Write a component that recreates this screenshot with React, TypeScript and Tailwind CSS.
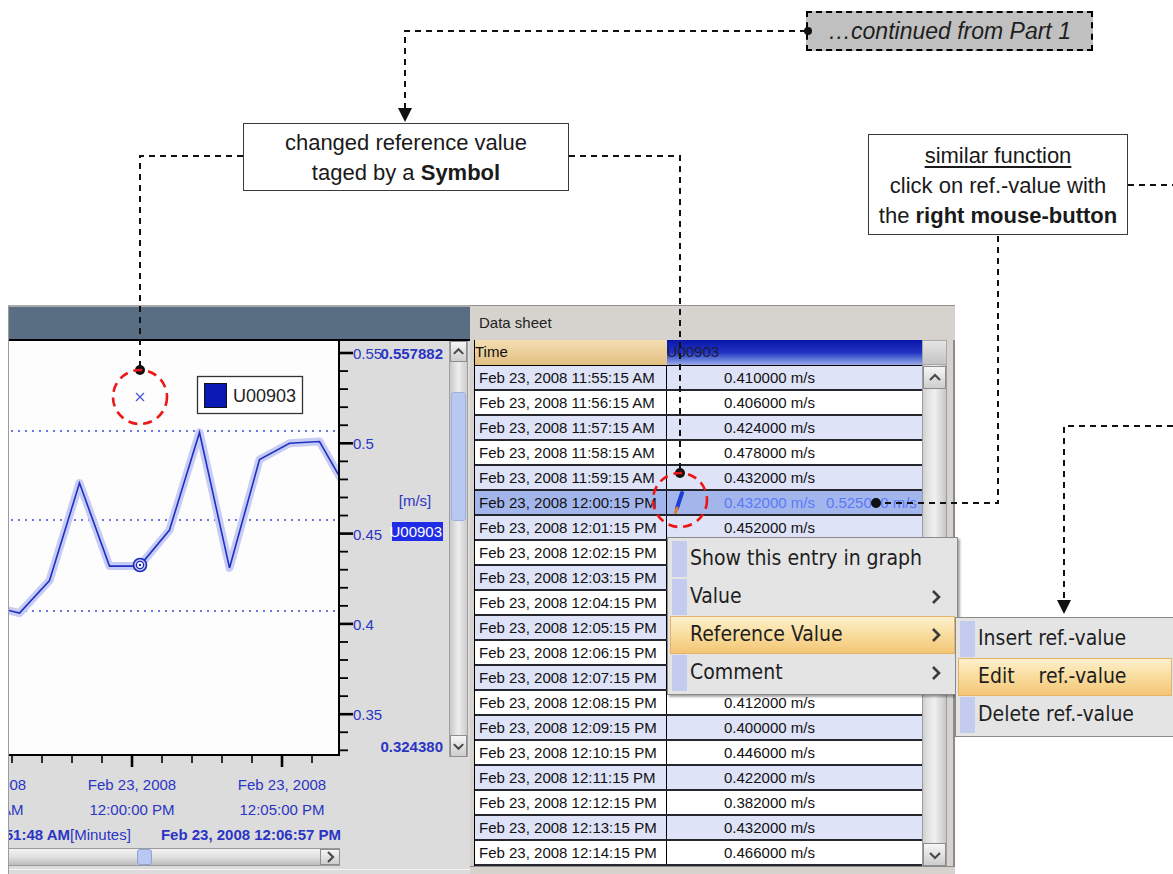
import React from "react";

// values of rows 12:02 - 12:07 are hidden under the context menu
const rows: [string, string][] = [
  ["Feb 23, 2008 11:55:15 AM", "0.410000 m/s"],
  ["Feb 23, 2008 11:56:15 AM", "0.406000 m/s"],
  ["Feb 23, 2008 11:57:15 AM", "0.424000 m/s"],
  ["Feb 23, 2008 11:58:15 AM", "0.478000 m/s"],
  ["Feb 23, 2008 11:59:15 AM", "0.432000 m/s"],
  ["Feb 23, 2008 12:00:15 PM", "0.432000 m/s"],
  ["Feb 23, 2008 12:01:15 PM", "0.452000 m/s"],
  ["Feb 23, 2008 12:02:15 PM", ""],
  ["Feb 23, 2008 12:03:15 PM", ""],
  ["Feb 23, 2008 12:04:15 PM", ""],
  ["Feb 23, 2008 12:05:15 PM", ""],
  ["Feb 23, 2008 12:06:15 PM", ""],
  ["Feb 23, 2008 12:07:15 PM", ""],
  ["Feb 23, 2008 12:08:15 PM", "0.412000 m/s"],
  ["Feb 23, 2008 12:09:15 PM", "0.400000 m/s"],
  ["Feb 23, 2008 12:10:15 PM", "0.446000 m/s"],
  ["Feb 23, 2008 12:11:15 PM", "0.422000 m/s"],
  ["Feb 23, 2008 12:12:15 PM", "0.382000 m/s"],
  ["Feb 23, 2008 12:13:15 PM", "0.432000 m/s"],
  ["Feb 23, 2008 12:14:15 PM", "0.466000 m/s"],
];

// minutes from 12:00 -> value
const series: [number, number][] = [
  [-4.75, 0.41],
  [-3.75, 0.406],
  [-2.75, 0.424],
  [-1.75, 0.478],
  [-0.75, 0.432],
  [0.25, 0.432],
  [1.25, 0.452],
  [2.25, 0.506],
  [3.25, 0.431],
  [4.25, 0.491],
  [5.25, 0.5],
  [6.25, 0.501],
  [7.25, 0.472],
];
const px = (t: number) => 132 + 30 * t;
const py = (v: number) => 353 + (0.55 - v) * 1806;
const linePts = series.map(([t, v]) => `${px(t)},${py(v)}`).join(" ");

const axisBlue = "#2b35c4";

const Chevron = ({ dir }: { dir: "up" | "down" | "right" }) => {
  const pts =
    dir === "up" ? "3,10 8,5 13,10" : dir === "down" ? "3,6 8,11 13,6" : "6,3 11,8 6,13";
  return (
    <svg width={16} height={16} viewBox="0 0 16 16">
      <polyline points={pts} fill="none" stroke="#4a4a4a" strokeWidth={2.2} />
    </svg>
  );
};

const ScrollButton = ({ dir, className }: { dir: "up" | "down" | "right"; className: string }) => (
  <div
    className={`flex items-center justify-center border border-[#8d8d8d] bg-linear-to-b from-[#f6f6f6] to-[#cdcdcd] ${className}`}
  >
    <Chevron dir={dir} />
  </div>
);

function ChartSvg() {
  const yTicks = Array.from({ length: 23 }, (_, k) => k);
  const xTicks = Array.from({ length: 11 }, (_, k) => k - 4);
  return (
    <svg width={440} height={507} className="block shrink-0">
      <defs>
        <clipPath id="plotClip">
          <rect x={9} y={341} width={329} height={413} />
        </clipPath>
      </defs>
      <g transform="translate(-9 -341)">
        <rect x={9} y={341} width={330} height={414} fill="#fdfdfd" />
        {[431, 520, 611].map((y) => (
          <line key={y} x1={11} x2={338} y1={y} y2={y} stroke="#3c4ad2" strokeWidth={1.5} strokeDasharray="2 5" />
        ))}
        <g clipPath="url(#plotClip)">
          <polyline points={linePts} fill="none" stroke="#c6ccf4" strokeWidth={8} strokeLinejoin="round" />
          <polyline points={linePts} fill="none" stroke="#1f2fc4" strokeWidth={1.6} />
        </g>
        <circle cx={140} cy={565} r={6.5} fill="#c6ccf4" stroke="#1a28b8" strokeWidth={1.6} />
        <circle cx={140} cy={565} r={3.6} fill="#fff" stroke="#1a28b8" strokeWidth={1.3} />
        <circle cx={140} cy={565} r={1.2} fill="#1a28b8" />
        <g stroke="#4a58d6" strokeWidth={1.3}>
          <line x1={136} y1={393} x2={144} y2={401} />
          <line x1={144} y1={393} x2={136} y2={401} />
        </g>
        <rect x={197.5} y={376.5} width={105} height={37} fill="#fff" stroke="#333" strokeWidth={1.3} />
        <rect x={204.5} y={383.5} width={22} height={24} fill="#0a18b4" stroke="#111" />
        <text x={233} y={402} fontSize={18} fill="#222">
          U00903
        </text>
        <line x1={339} y1={341} x2={339} y2={756} stroke="#000" strokeWidth={2} />
        <line x1={9} y1={755} x2={340} y2={755} stroke="#000" strokeWidth={2} />
        {yTicks.map((k) => {
          const y = 353 + k * 18.06;
          const major = k % 5 === 0;
          return (
            <line key={k} x1={340} x2={major ? 353 : 348} y1={y} y2={y} stroke="#000" strokeWidth={major ? 2.6 : 1.8} />
          );
        })}
        {[
          ["0.55", 353],
          ["0.5", 443],
          ["0.45", 534],
          ["0.4", 624],
          ["0.35", 714],
        ].map(([l, y]) => (
          <text key={l} x={353} y={(y as number) + 5.5} fontSize={15} fill={axisBlue}>
            {l}
          </text>
        ))}
        <text x={443} y={359} fontSize={15} fontWeight={700} fill={axisBlue} textAnchor="end">
          0.557882
        </text>
        <text x={443} y={752} fontSize={15} fontWeight={700} fill={axisBlue} textAnchor="end">
          0.324380
        </text>
        <text x={415} y={506} fontSize={15} fill={axisBlue} textAnchor="middle">
          [m/s]
        </text>
        <rect x={392} y={522} width={51} height={19} fill="#1f2ee6" />
        <text x={442} y={537} fontSize={15} fill="#fff" textAnchor="end">
          U00903
        </text>
        {xTicks.map((k) => {
          const x = 132 + 30 * k;
          const major = k % 5 === 0;
          return (
            <line key={k} x1={x} x2={x} y1={756} y2={major ? 767 : 763} stroke="#000" strokeWidth={major ? 2.6 : 1.6} />
          );
        })}
        {[
          [-18, "11:55:00 AM"],
          [132, "12:00:00 PM"],
          [282, "12:05:00 PM"],
        ].map(([x, t]) => (
          <g key={t} fontSize={15} fill={axisBlue} textAnchor="middle">
            <text x={x as number} y={790}>
              Feb 23, 2008
            </text>
            <text x={x as number} y={815}>
              {t}
            </text>
          </g>
        ))}
        <text x={70} y={840} fontSize={15} fontWeight={700} fill={axisBlue} textAnchor="end">
          Feb 23, 2008 11:51:48 AM
        </text>
        <text x={70} y={840} fontSize={15} fill={axisBlue}>
          [Minutes]
        </text>
        <text x={341} y={840} fontSize={15} fontWeight={700} fill={axisBlue} textAnchor="end">
          Feb 23, 2008 12:06:57 PM
        </text>
      </g>
    </svg>
  );
}

function ChartPanel() {
  return (
    <div className="flex h-[569px] w-[462px] shrink-0 flex-col border-l border-[#9c9c9c] bg-[#dcdcdc]">
      <div className="h-[36px] shrink-0 border-t-2 border-b-2 border-t-[#aaaaaa] border-b-black bg-[#596d83]" />
      <div className="flex h-[507px] items-start">
        <ChartSvg />
        <div className="flex h-[416px] w-[19px] flex-col border-x border-[#a0a0a0] bg-linear-to-r from-[#c8c8c8] via-[#eeeeee] to-[#cccccc]">
          <ScrollButton dir="up" className="h-[21px]" />
          <div className="flex-1">
            <div className="mx-[1px] mt-[30px] h-[129px] rounded-[3px] border border-[#9fb0de] bg-[#b9c8f1]" />
          </div>
          <ScrollButton dir="down" className="h-[22px]" />
        </div>
      </div>
      <div className="flex h-[18px] w-[331px] border-y border-[#9a9a9a] bg-linear-to-b from-[#f2f2f2] via-[#e0e0e0] to-[#bdbdbd]">
        <div className="ml-[128px] h-full w-[15px] rounded-[3px] border border-[#8ea3da] bg-[#b9c8f1]" />
        <ScrollButton dir="right" className="ml-auto h-full w-[20px]" />
      </div>
      <div className="mt-[3px] flex-1 border-t border-[#f4f4f4]" />
    </div>
  );
}

const Pencil = () => (
  <svg width={14} height={24} viewBox="0 0 14 24">
    <line x1={10} y1={2} x2={5} y2={17} stroke="#1d3fd6" strokeWidth={4} strokeLinecap="round" />
    <line x1={5} y1={17} x2={3.5} y2={21.5} stroke="#e07a2a" strokeWidth={3} strokeLinecap="round" />
  </svg>
);

function DataSheet() {
  return (
    <div className="flex h-[569px] w-[485px] shrink-0 flex-col border-t border-[#8f8f8f] bg-[#d6d3ce]">
      <div className="flex h-[34px] shrink-0 items-center pl-[9px] text-[15px] text-[#222]">Data sheet</div>
      <div className="flex">
        <div className="ml-[4px] flex w-[473px] flex-col border-l border-black text-[15px] text-[#111]">
          <div className="flex h-[25px]">
            <div className="flex w-[192px] items-center bg-linear-to-b from-[#f4deb2] to-[#e2bf82]">Time</div>
            <div className="flex w-[256px] items-center bg-linear-to-b from-[#0814a8] via-[#2232c2] to-[#9ea9e6] text-[#1c1c3a]">
              U00903
            </div>
            <div className="w-[25px] border border-[#a8a8a8] bg-linear-to-b from-[#e4e4e4] to-[#c4c4c4]" />
          </div>
          <div className="flex">
            <div className="w-[448px] border-t border-black">
              {rows.map(([time, value], i) => {
                const sel = i === 5;
                const bg = sel ? "bg-[#a3b6ec]" : i % 2 === 0 ? "bg-[#dfe3f8]" : "bg-white";
                return (
                  <div key={time} className={`flex h-[25px] border-b-2 border-[#26262e] ${bg}`}>
                    <div className="flex w-[192px] items-center border-r border-black pl-[4px] pt-[1px]">{time}</div>
                    {sel ? (
                      <div className="flex flex-1 items-center pl-[5px] pt-[1px] text-[#5a78fa]">
                        <Pencil />
                        <span className="ml-[38px]">{value}</span>
                        <span className="ml-[11px]">0.525000 m/s</span>
                      </div>
                    ) : (
                      <div className="flex flex-1 items-center pl-[57px] pt-[1px]">{value}</div>
                    )}
                  </div>
                );
              })}
            </div>
            <div className="flex w-[25px] flex-col border-x border-[#9d9d9d] bg-linear-to-r from-[#d0d0d0] via-[#ececec] to-[#c6c6c6]">
              <ScrollButton dir="up" className="mt-[1px] h-[23px]" />
              <div className="mx-[2px] my-[1px] flex-1 rounded-[3px] bg-linear-to-r from-[#dadada] via-[#f0f0f0] to-[#cfcfcf]" />
              <ScrollButton dir="down" className="h-[23px]" />
            </div>
          </div>
        </div>
        <div className="w-[8px] border-r-2 border-[#8a8a8a] bg-[#d6d3ce]" />
      </div>
      <div className="flex-1 border-t border-[#8a8a8a] bg-[#d6d3ce]" />
    </div>
  );
}

const MenuArrow = () => (
  <svg width={12} height={18} viewBox="0 0 12 18" className="absolute right-[12px]">
    <polyline points="3,3 9,9 3,15" fill="none" stroke="#3c3c3c" strokeWidth={2.6} />
  </svg>
);

function MenuItem({ label, active, arrow }: { label: string; active?: boolean; arrow?: boolean }) {
  return (
    <div
      className={`relative flex h-[38px] items-center ${
        active ? "border border-[#e6b26a] bg-linear-to-b from-[#fdf0cc] via-[#f9dc9c] to-[#f3c676]" : "border border-transparent"
      }`}
    >
      <div className={`ml-[1px] h-full w-[15px] ${active ? "bg-transparent" : "bg-[#c3cbef]"}`} />
      <span className="ml-[3px] whitespace-pre">{label}</span>
      {arrow && <MenuArrow />}
    </div>
  );
}

export default function App() {
  return (
    <div className="relative h-[874px] w-[1173px] overflow-hidden bg-white font-['Liberation_Sans',Arial,sans-serif] text-[#1a1a1a]">
      {/* callouts */}
      <div className="absolute left-[806px] top-[11px] flex h-[40px] w-[287px] items-center justify-center border-2 border-dashed border-black bg-[#c0c0c0] text-[23px] italic text-[#1e1e1e]">
        …continued from Part 1
      </div>
      <div className="absolute left-[243px] top-[123px] h-[68px] w-[326px] border border-[#3a3a3a] bg-white pt-[4px] text-center text-[22px] leading-[30px]">
        <div>changed reference value</div>
        <div>
          taged by a <b>Symbol</b>
        </div>
      </div>
      <div className="absolute left-[868px] top-[134px] h-[101px] w-[260px] border border-[#3a3a3a] bg-white pt-[6px] text-center text-[22px] leading-[30px]">
        <div>
          <span className="underline underline-offset-[3px]">similar function</span>
        </div>
        <div>click on ref.-value with</div>
        <div>
          the <b>right mouse-button</b>
        </div>
      </div>

      {/* application window */}
      <div className="flex pl-[8px] pt-[305px]">
        <ChartPanel />
        <DataSheet />
      </div>

      {/* connectors */}
      <svg className="pointer-events-none absolute left-0 top-0 z-10" width={1173} height={874}>
        <g fill="none" stroke="#111" strokeWidth={2} strokeDasharray="6 5">
          <polyline points="806,31 405,31 405,108" />
          <polyline points="243,156 140,156 140,370" />
          <polyline points="569,156 680,156 680,473" />
          <polyline points="1128,185 1173,185" />
          <polyline points="998,236 998,503 876,503" />
          <polyline points="1173,426 1064,426 1064,600" />
        </g>
        <polygon points="398,108 412,108 405,122" fill="#111" />
        <polygon points="1057,600 1071,600 1064,614" fill="#111" />
        <circle cx={808} cy={31} r={4} fill="#111" />
        <circle cx={140} cy={370} r={5} fill="#111" />
        <circle cx={680} cy={473} r={5} fill="#111" />
        <circle cx={876} cy={503} r={5} fill="#111" />
        <g fill="none" stroke="#ee1515" strokeWidth={2.6} strokeDasharray="9 6">
          <circle cx={140} cy={397} r={27} />
          <circle cx={680} cy={500} r={27} />
        </g>
      </svg>

      {/* context menu */}
      <div className="absolute left-[667px] top-[537px] z-20 w-[291px] border border-[#8a8a8a] bg-[#e4e4e4] p-[2px] font-['DejaVu_Sans_Condensed','Liberation_Sans',sans-serif] text-[21px] text-[#1e1e1e] shadow-[2px_2px_2px_rgba(0,0,0,0.35)]">
        <MenuItem label="Show this entry in graph" />
        <MenuItem label="Value" arrow />
        <MenuItem label="Reference Value" active arrow />
        <MenuItem label="Comment" arrow />
      </div>
      <div className="absolute left-[955px] top-[617px] z-20 w-[220px] border border-[#8a8a8a] bg-[#e4e4e4] p-[2px] font-['DejaVu_Sans_Condensed','Liberation_Sans',sans-serif] text-[21px] text-[#1e1e1e]">
        <MenuItem label="Insert ref.-value" />
        <MenuItem label="Edit    ref.-value" active />
        <MenuItem label="Delete ref.-value" />
      </div>
    </div>
  );
}
